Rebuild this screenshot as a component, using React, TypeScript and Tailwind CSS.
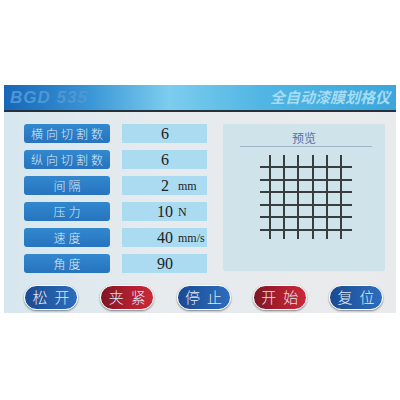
const rows: { label: string; value: string; unit?: string }[] = [
  { label: '横向切割数', value: '6' },
  { label: '纵向切割数', value: '6' },
  { label: '间隔', value: '2', unit: 'mm' },
  { label: '压力', value: '10', unit: 'N' },
  { label: '速度', value: '40', unit: 'mm/s' },
  { label: '角度', value: '90' },
];

const buttons: { text: string; red?: boolean }[] = [
  { text: '松开' },
  { text: '夹紧', red: true },
  { text: '停止' },
  { text: '开始', red: true },
  { text: '复位' },
];

const cjk = { fontFamily: '"Noto Sans CJK SC", "Noto Sans", sans-serif' };
const serif = { fontFamily: '"Liberation Serif", "DejaVu Serif", serif' };

function Grid() {
  const xs = [270, 284, 298, 313, 327, 341];
  const ys = [180, 193, 205, 218, 230, 243];
  return (
    <svg width="162" height="110" viewBox="223 160 162 110" className="block">
      {xs.map(x => (
        <line key={'v' + x} x1={x} y1={168} x2={x} y2={252} stroke="#3a3d40" strokeWidth="2" />
      ))}
      {ys.map(y => (
        <line key={'h' + y} x1={260} y1={y} x2={352} y2={y} stroke="#3a3d40" strokeWidth="2" />
      ))}
    </svg>
  );
}

export default function App() {
  return (
    <div className="w-[400px] h-[400px] bg-white pt-[85px] px-[4px]">
      <div className="w-[392px]">
        <div className="h-[27px] flex items-center justify-between px-[6px] bg-[linear-gradient(90deg,#1766b8_0%,#3a96d6_22%,#7ccdee_42%,#52b6e4_65%,#3aa6dc_100%)] border-b-2 border-[#27313b]">
          <span className="text-[17px] font-bold italic tracking-[1px] text-[#4f97d4]" style={{ fontFamily: '"Liberation Sans", Arial, sans-serif' }}>
            BGD 535
          </span>
          <span className="text-[15px] font-bold italic text-[#a6dbf2]" style={cjk}>
            全自动漆膜划格仪
          </span>
        </div>
        <div className="h-[201px] bg-[linear-gradient(90deg,#d7e7ef_0%,#e7ebed_40%,#e9eaec_100%)] pt-[12px] px-[20px]">
          <div className="flex">
            <div className="flex flex-col gap-[7px]">
              {rows.map(r => (
                <div key={r.label} className="flex gap-[12px]">
                  <div className="w-[86px] h-[19px] rounded-[3px] bg-[linear-gradient(180deg,#3288cf,#2674bd)] flex items-center justify-center text-[12px] font-light tracking-[3px] pl-[3px] text-[#dcebf7]" style={cjk}>
                    {r.label}
                  </div>
                  <div className="w-[85px] h-[19px] bg-[#abdbf0] flex items-center pl-[35px] text-[#222]" style={serif}>
                    <span className="w-[16px] text-center text-[16px] leading-none">{r.value}</span>
                    {r.unit && <span className="ml-[5px] text-[12px] leading-none">{r.unit}</span>}
                  </div>
                </div>
              ))}
            </div>
            <div className="ml-[16px] w-[162px] h-[147px] bg-[#cee3ea] rounded-[2px] flex flex-col">
              <div className="pt-[7px] h-[22px] text-center text-[12px] leading-[14px] text-[#5470a8]" style={cjk}>
                预览
              </div>
              <div className="ml-[17px] mr-[13px] h-px bg-[#9fb4c8]" />
              <Grid />
            </div>
          </div>
          <div className="mt-[12px] flex justify-between mr-[-7px]">
            {buttons.map(b => (
              <div
                key={b.text}
                className={
                  'w-[54px] h-[25px] rounded-full border-[1.5px] border-white shadow-[0_1px_2px_rgba(0,0,0,0.45)] flex items-center justify-center text-[15px] font-light tracking-[7px] pl-[7px] text-[#e2e9f4] ' +
                  (b.red
                    ? 'bg-[linear-gradient(90deg,#7d1624,#b42030_60%,#c9293a)]'
                    : 'bg-[linear-gradient(90deg,#1a4a92,#2560ad_60%,#2d6dbd)]')
                }
                style={cjk}
              >
                {b.text}
              </div>
            ))}
          </div>
        </div>
      </div>
    </div>
  );
}
